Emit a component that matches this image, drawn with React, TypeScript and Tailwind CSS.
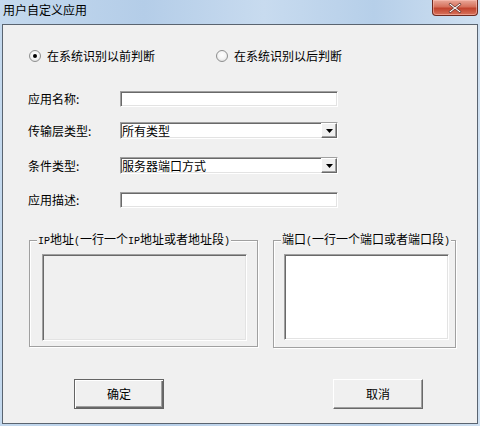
import React from 'react';

const font = { fontFamily: '"Noto Sans CJK SC", "Liberation Sans", sans-serif' };

// classic sunken edit border
const sunken =
  'border border-t-[#a0a0a0] border-l-[#a0a0a0] border-r-white border-b-white shadow-[inset_1px_1px_0_#696969,inset_-1px_-1px_0_#e3e3e3]';

const Radio = ({ checked, label }: { checked?: boolean; label: string }) => (
  <div className="flex items-center h-[12px]">
    <span className="w-[12px] h-[12px] rounded-full border border-[#8e8f8f] bg-[radial-gradient(circle_at_50%_40%,#ffffff_0%,#f4f4f4_50%,#d6d6d6_100%)] flex items-center justify-center">
      {checked && <span className="w-[4px] h-[4px] rounded-full bg-black" />}
    </span>
    <span className="ml-[6px] text-[12px] leading-[12px] text-black">{label}</span>
  </div>
);

const TextInput = () => <div className={`w-[218px] h-[16px] bg-white ${sunken}`} />;

const Combo = ({ value }: { value: string }) => (
  <div className={`w-[218px] h-[17px] bg-white flex items-center ${sunken}`}>
    <span className="flex-1 pl-[1px] text-[12px] leading-[12px] text-black">{value}</span>
    <span className="w-[16px] h-[15px] bg-[#f0f0f0] border border-t-white border-l-white border-r-[#696969] border-b-[#696969] shadow-[inset_-1px_-1px_0_#a0a0a0] flex items-center justify-center">
      <svg width="7" height="4" viewBox="0 0 7 4">
        <path d="M0 0h7L3.5 4z" fill="#000" />
      </svg>
    </span>
  </div>
);

const FormRow = ({ label, children, mt }: { label: string; children: React.ReactNode; mt: string }) => (
  <div className={`flex items-center pl-[25px] ${mt}`}>
    <span className="w-[92px] text-[12px] leading-[12px] text-black">{label}</span>
    {children}
  </div>
);

const Half = ({ children }: { children: React.ReactNode }) => (
  <span className="text-[10px] [font-family:'Liberation_Mono',monospace]">{children}</span>
);

const groupBox =
  'border border-[#a0a0a0] shadow-[inset_1px_1px_0_#fff,1px_1px_0_#fff] min-w-0';
const legendCls =
  'ml-[7px] px-[1px] bg-[#f0f0f0] text-[12px] leading-[12px] text-black whitespace-nowrap';

const App: React.FC = () => {
  return (
    <div
      className="w-[480px] h-[426px] flex flex-col bg-[linear-gradient(90deg,#c4d9ee_0%,#b4cde8_30%,#c8dbef_55%,#b6cfe9_78%,#cfe0f1_100%)]"
      style={font}
    >
      {/* title bar */}
      <div className="h-[24px] flex items-start justify-between">
        <span className="pl-[3px] pt-[4px] text-[12px] leading-[12px] text-black">用户自定义应用</span>
        <div className="mr-[2px] w-[46px] h-[16px] rounded-b-[4px] border border-t-0 border-[#6e2a20] bg-[linear-gradient(180deg,#e9a899_0%,#d6715c_45%,#c1432d_55%,#d8735d_100%)] flex items-center justify-center shadow-[inset_0_0_0_1px_rgba(255,200,190,0.5)]">
          <svg width="14" height="12" viewBox="0 0 14 12">
            <path d="M2 1l5 4 5-4 1 1.5-4.5 3.5 4.5 3.5-1 1.5-5-4-5 4-1-1.5L5.5 6 1 2.5z" fill="#fff" stroke="#5a2a22" strokeWidth="0.8" />
          </svg>
        </div>
      </div>

      {/* client area */}
      <div className="mx-[2px] mb-[2px] flex-1 border border-[#5a6470] bg-[#f0f0f0] flex flex-col">
        <div className="mt-[25px] pl-[26px] flex">
          <div className="w-[187px]">
            <Radio checked label="在系统识别以前判断" />
          </div>
          <Radio label="在系统识别以后判断" />
        </div>

        <FormRow label="应用名称:" mt="mt-[29px]">
          <TextInput />
        </FormRow>
        <FormRow label="传输层类型:" mt="mt-[15px]">
          <Combo value="所有类型" />
        </FormRow>
        <FormRow label="条件类型:" mt="mt-[18px]">
          <Combo value="服务器端口方式" />
        </FormRow>
        <FormRow label="应用描述:" mt="mt-[18px]">
          <TextInput />
        </FormRow>

        <div className="mt-[25px] pl-[26px] flex gap-[15px]">
          <fieldset className={`w-[229px] h-[114px] ${groupBox}`}>
            <legend className={legendCls}>
              <Half>IP</Half>地址<Half>(</Half>一行一个<Half>IP</Half>地址或者地址段<Half>)</Half>
            </legend>
            <div className={`ml-[12px] mt-[6px] w-[205px] h-[87px] bg-[#f0f0f0] ${sunken}`} />
          </fieldset>
          <fieldset className={`w-[183px] h-[115px] ${groupBox}`}>
            <legend className={legendCls}>
              端口<Half>(</Half>一行一个端口或者端口段<Half>)</Half>
            </legend>
            <div className={`ml-[10px] mt-[6px] w-[165px] h-[86px] bg-white ${sunken}`} />
          </fieldset>
        </div>

        <div className="mt-[31px] pl-[71px] flex gap-[169px]">
          <button className="w-[90px] h-[30px] bg-[#f0f0f0] border border-[#646464] shadow-[inset_1px_1px_0_#fff,inset_-1px_-1px_0_#696969,inset_-2px_-2px_0_#a0a0a0] text-[12px] leading-[12px] text-black">
            确定
          </button>
          <button className="w-[90px] h-[30px] bg-[#f0f0f0] border border-t-white border-l-white border-r-[#696969] border-b-[#696969] shadow-[inset_-1px_-1px_0_#a0a0a0] text-[12px] leading-[12px] text-black">
            取消
          </button>
        </div>
      </div>
    </div>
  );
};

export default App;
